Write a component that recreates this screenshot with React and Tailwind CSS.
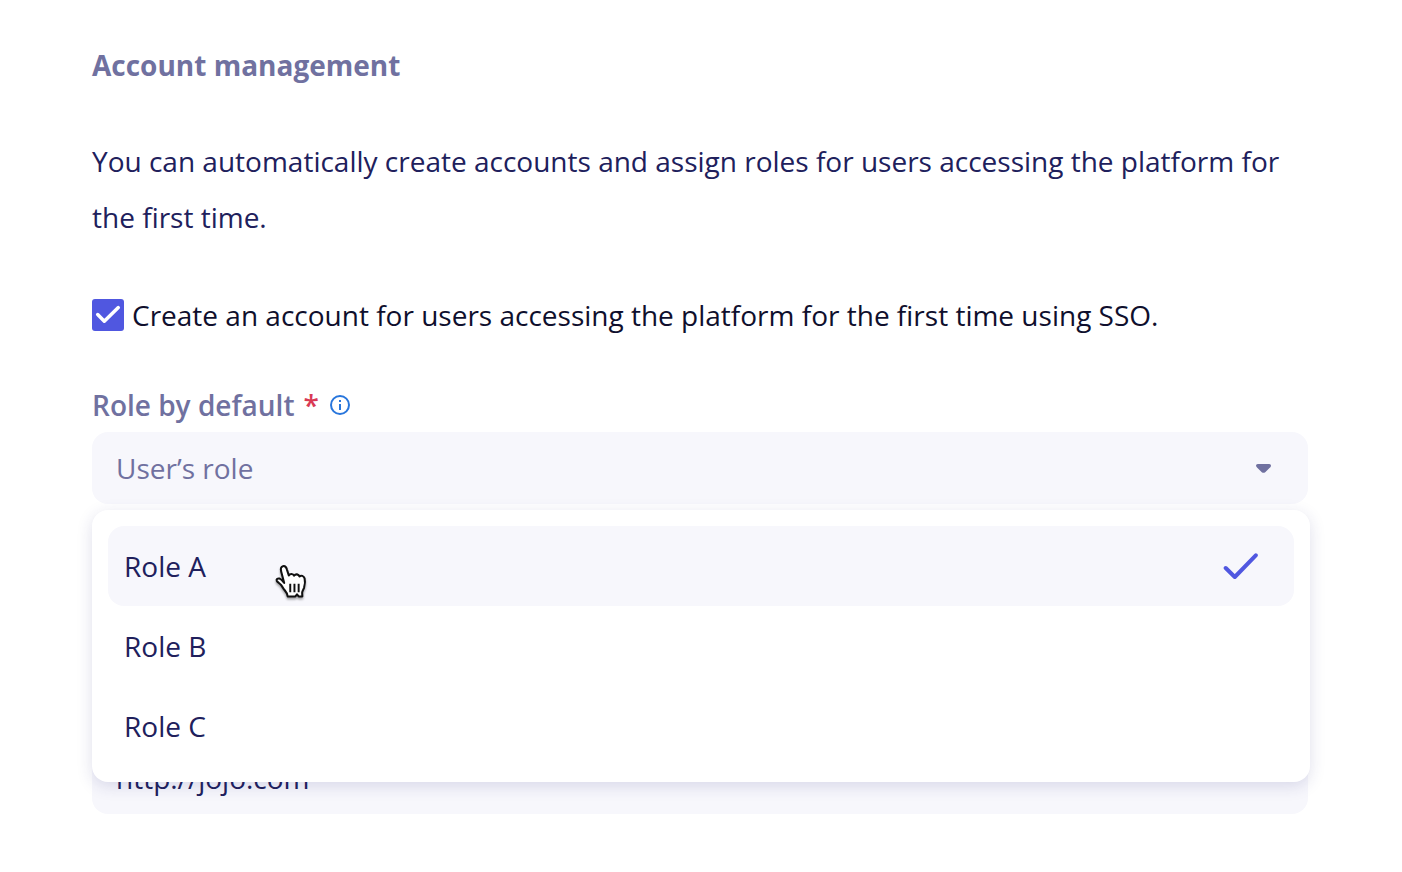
import React from "react";

function Cursor() {
  return (
    <svg
      className="absolute left-[274px] top-[563px] h-[41px] w-[37px] drop-shadow-[0_2px_1px_rgba(0,0,0,0.35)]"
      viewBox="0 0 36 40"
      aria-hidden="true"
    >
      <path
        d="M9.900 19.500L7 8.500C6.200 5.500 6.700 3.600 8.600 3.100C10.700 2.600 11.900 4 12.500 6.200L14.400 12.200C15.500 10.200 18.700 10.200 19.500 12.400C21 10.400 24 10.700 24.800 13.200C26.400 11.700 29 12.400 29.800 15C30.500 17.500 30.100 21 29.300 24C28.700 26 27.500 27.200 27.400 29L27.600 32.600H24L22.400 30.600L20.800 32.600H13.300C13.200 29.500 11.200 27.600 9.500 25.500L6.800 21.400C5.500 19.800 3.300 18.700 2.600 17.300C2 15.700 3.700 14.700 5.300 15.200C7.200 15.800 8.500 17.700 9.900 19.500Z"
        fill="#fff"
        stroke="#111"
        strokeWidth="2"
        strokeLinejoin="round"
      />
      <path d="M15.800 20.200V28.500M19.900 20.200V28.500M24 20.200V28.500" stroke="#111" strokeWidth="1.900" />
    </svg>
  );
}

export default function App() {
  return (
    <main className="relative h-[872px] w-[1402px] overflow-hidden bg-white px-[92px] pt-[45px] font-['Open_Sans',sans-serif] text-[28px] text-[#20205c]">
      <h1 className="h-10 text-[28px] font-bold leading-10 text-[#7071a0]">Account management</h1>
      <p className="mt-12 h-28 w-[1216px] leading-[56px]">
        You can automatically create accounts and assign roles for users accessing the platform for the first time.
      </p>
      <label className="mt-[50px] flex h-10 items-center gap-2 text-[#0f0f2d]">
        <span className="flex size-8 items-center justify-center rounded-[3px] bg-[#5057e0]">
          <svg className="size-8" viewBox="0 0 32 32" fill="none">
            <path d="M5.700 15.600l6.600 6.600L26.300 8.600" stroke="#fff" strokeWidth="3.500" strokeLinecap="round" strokeLinejoin="round" />
          </svg>
        </span>
        Create an account for users accessing the platform for the first time using SSO.
      </label>
      <div className="mt-[50px] flex h-10 items-center font-semibold text-[#7071a0]">
        Role by default <span className="ml-[9px] text-[#d93a54]">*</span>
        <svg className="ml-[9px] size-6" viewBox="0 0 24 24" fill="#2876dc">
          <path d="M11 7h2v2h-2zm0 4h2v6h-2zm1-9a10 10 0 100 20 10 10 0 000-20zm0 18a8 8 0 110-16 8 8 0 010 16z" />
        </svg>
      </div>
      <div className="mt-[7px] flex h-[72px] w-[1216px] items-center justify-between rounded-2xl bg-[#f7f7fc] pl-6 pr-[37px] text-[#7071a0]">
        User’s role
        <svg className="h-[9px] w-[15px]" viewBox="0 0 15 9" fill="#7071a0">
          <path d="M1.800 0H13.200Q15 0 15 1.500T13.500 4L9.200 8.200Q7.500 9.500 5.800 8.200L1.500 4Q0 2.800 0 1.500T1.800 0" />
        </svg>
      </div>
      <div className="mt-[238px] flex h-[72px] w-[1216px] items-center rounded-2xl bg-[#f7f7fc] px-6">http://jojo.com</div>
      <div className="absolute left-[92px] top-[510px] h-[272px] w-[1218px] rounded-2xl bg-white p-4 shadow-[0_4px_16px_rgba(40,40,120,0.15)]">
        <div className="flex h-20 items-center justify-between rounded-2xl bg-[#f7f7fc] pl-4 pr-[35px]">
          Role A
          <svg className="h-7 w-9" viewBox="0 0 36 28" fill="none">
            <path d="M2.700 16l9.100 9L32.800 3.300" stroke="#5057e0" strokeWidth="4" strokeLinecap="round" strokeLinejoin="round" />
          </svg>
        </div>
        <div className="flex h-20 items-center px-4">Role B</div>
        <div className="flex h-20 items-center px-4">Role C</div>
      </div>
      <Cursor />
    </main>
  );
}
